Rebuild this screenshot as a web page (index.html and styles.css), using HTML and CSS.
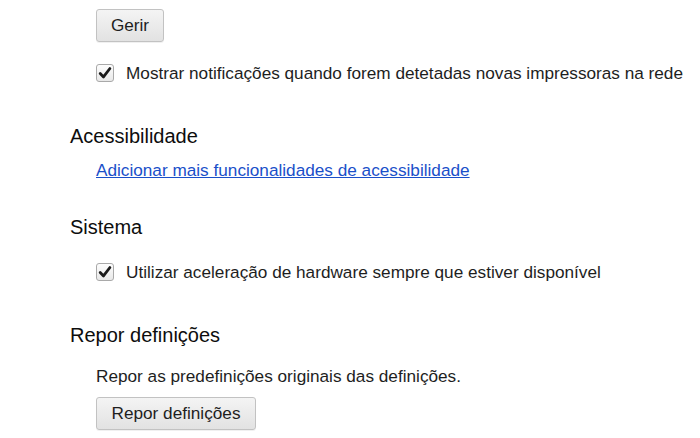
FILE: index.html
```html
<!DOCTYPE html>
<html lang="pt">
<head>
<meta charset="utf-8">
<link rel="stylesheet" href="styles.css">
</head>
<body>
<div class="page">
  <div class="indent">
    <button class="btn btn-gerir">Gerir</button>
    <label class="check-row row-1">
      <span class="box"><svg viewBox="0 0 18 18" width="18" height="18"><path d="M4.2 9.6 L7.5 12.9 L13.9 4.5" fill="none" stroke="#1a1a1a" stroke-width="2.8" stroke-linecap="round" stroke-linejoin="round"/></svg></span>
      <span class="label">Mostrar notificações quando forem detetadas novas impressoras na rede</span>
    </label>
  </div>

  <h2 class="heading h-acc">Acessibilidade</h2>
  <div class="indent">
    <a class="link" href="#">Adicionar mais funcionalidades de acessibilidade</a>
  </div>

  <h2 class="heading h-sys">Sistema</h2>
  <div class="indent">
    <label class="check-row row-2">
      <span class="box"><svg viewBox="0 0 18 18" width="18" height="18"><path d="M4.2 9.6 L7.5 12.9 L13.9 4.5" fill="none" stroke="#1a1a1a" stroke-width="2.8" stroke-linecap="round" stroke-linejoin="round"/></svg></span>
      <span class="label">Utilizar aceleração de hardware sempre que estiver disponível</span>
    </label>
  </div>

  <h2 class="heading h-reset">Repor definições</h2>
  <div class="indent">
    <p class="desc">Repor as predefinições originais das definições.</p>
    <button class="btn btn-reset">Repor definições</button>
  </div>
</div>
</body>
</html>
```

FILE: styles.css
```css
* { box-sizing: border-box; }
html, body { margin: 0; padding: 0; background: #ffffff; }
body {
  font-family: "Liberation Sans", Arial, Helvetica, sans-serif;
  color: #1e1e1e;
  font-size: 17.2px;
  line-height: 20px;
  width: 700px;
  height: 438px;
  overflow: hidden;
}
.page { padding-left: 70px; padding-top: 9px; }
.indent { padding-left: 26px; display: flex; flex-direction: column; align-items: flex-start; }

.btn {
  font-family: inherit;
  font-size: 17.2px;
  color: #1e1e1e;
  height: 33px;
  padding: 0;
  border: 1px solid #c2c2c2;
  border-radius: 3px;
  background: linear-gradient(#f4f4f4, #e2e2e2);
  box-shadow: 0 1px 0 rgba(0,0,0,0.06);
  line-height: 31px;
  margin: 0;
}
.btn-gerir { width: 68px; }
.btn-reset { width: 160px; margin-top: 11px; }

.check-row { display: flex; align-items: center; height: 20px; gap: 12px; }
.row-1 { margin-top: 21px; }
.row-2 { margin-top: 23px; }
.box {
  width: 18px; height: 18px;
  border: 1px solid #a9a9a9;
  border-radius: 3px;
  background: linear-gradient(#fdfdfd, #e8e8e8);
  display: flex;
  position: relative;
}
.box svg { position: absolute; left: -1px; top: -1px; }

.heading {
  font-size: 20px;
  line-height: 24px;
  font-weight: normal;
  color: #0d0d0d;
  margin: 0;
}
.h-acc { margin-top: 41px; }
.h-sys { margin-top: 35px; }
.h-reset { margin-top: 41px; }

.link {
  margin-top: 12px;
  color: #1a4fc9;
  text-decoration: underline;
}
.desc { margin: 19px 0 0 0; }
```
